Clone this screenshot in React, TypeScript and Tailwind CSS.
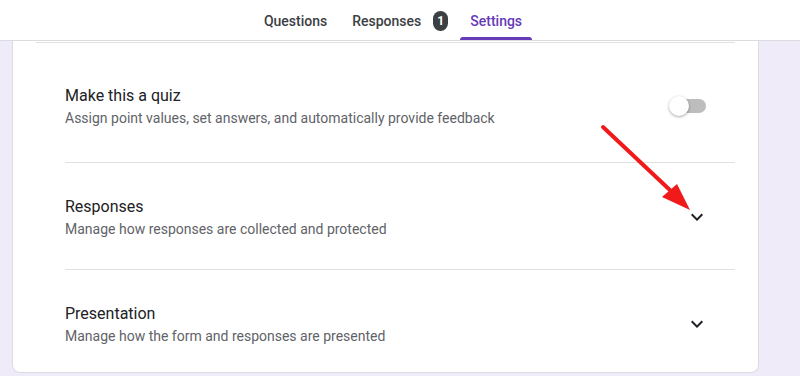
import React from "react";

function Chevron() {
  return (
    <svg width="24" height="24" viewBox="0 0 24 24" className="mr-[26px] shrink-0">
      <path d="M16.59 8.59L12 13.17 7.41 8.59 6 10l6 6 6-6z" fill="#202124" />
    </svg>
  );
}

function Row({
  title,
  sub,
  right,
  className,
}: {
  title: string;
  sub: string;
  right: React.ReactNode;
  className: string;
}) {
  return (
    <div className={"flex items-center justify-between " + className}>
      <div className="flex flex-col">
        <div className="text-[16px] leading-[24px] text-[#202124]">{title}</div>
        <div className="text-[14px] leading-[20px] text-[#5f6368]">{sub}</div>
      </div>
      {right}
    </div>
  );
}

export default function App() {
  return (
    <div
      className="relative w-[800px] h-[376px] overflow-hidden bg-[#f0ebf8]"
      style={{ fontFamily: "Roboto, 'Noto Sans', sans-serif" }}
    >
      <header className="h-[41px] bg-white border-b border-[#dadce0] flex justify-center pr-[16px]">
        <div className="flex h-full items-stretch">
          <div className="px-[12px] flex items-center text-[14px] font-medium text-[#3c4043] pt-[2px]">
            Questions
          </div>
          <div className="pl-[13px] pr-[12px] flex items-center text-[14px] font-medium text-[#3c4043] pt-[2px]">
            Responses
            <span className="ml-[12px] w-[15px] h-[20px] rounded-full bg-[#3c4043] text-white text-[12px] font-bold flex items-center justify-center">
              1
            </span>
          </div>
          <div className="relative px-[10px] flex items-center text-[14px] font-medium text-[#673ab7] pt-[2px]">
            Settings
            <div className="absolute left-0 right-0 bottom-0 h-[3px] rounded-t-[3px] bg-[#673ab7]" />
          </div>
        </div>
      </header>

      <div className="ml-[12px] w-[747px] bg-white rounded-b-lg border-x border-b border-[#dadce0] px-[23px] pt-px">
        <div className="border-t border-[#e0e0e0]">
          <div className="ml-[29px]">
            <Row
              className="pt-[41px] pb-[34px] border-b border-[#e0e0e0]"
              title="Make this a quiz"
              sub="Assign point values, set answers, and automatically provide feedback"
              right={
                <div className="relative w-[34px] h-[14px] rounded-full bg-[#bdbdbd] mr-[29px]">
                  <div className="absolute left-[-3px] top-[-3px] w-[20px] h-[20px] rounded-full bg-white shadow-[0_1px_3px_rgba(0,0,0,0.35)]" />
                </div>
              }
            />
            <Row
              className="pt-[32px] pb-[30px] border-b border-[#e0e0e0]"
              title="Responses"
              sub="Manage how responses are collected and protected"
              right={<Chevron />}
            />
            <Row
              className="pt-[32px] pb-[26px]"
              title="Presentation"
              sub="Manage how the form and responses are presented"
              right={<Chevron />}
            />
          </div>
        </div>
      </div>

      <svg
        className="absolute left-0 top-0 pointer-events-none"
        width="800"
        height="376"
        viewBox="0 0 800 376"
      >
        <line x1="603" y1="127" x2="672" y2="192" stroke="#f01a1a" strokeWidth="4" strokeLinecap="round" />
        <polygon points="690,210 662,197 677,184" fill="#f01a1a" />
      </svg>
    </div>
  );
}
